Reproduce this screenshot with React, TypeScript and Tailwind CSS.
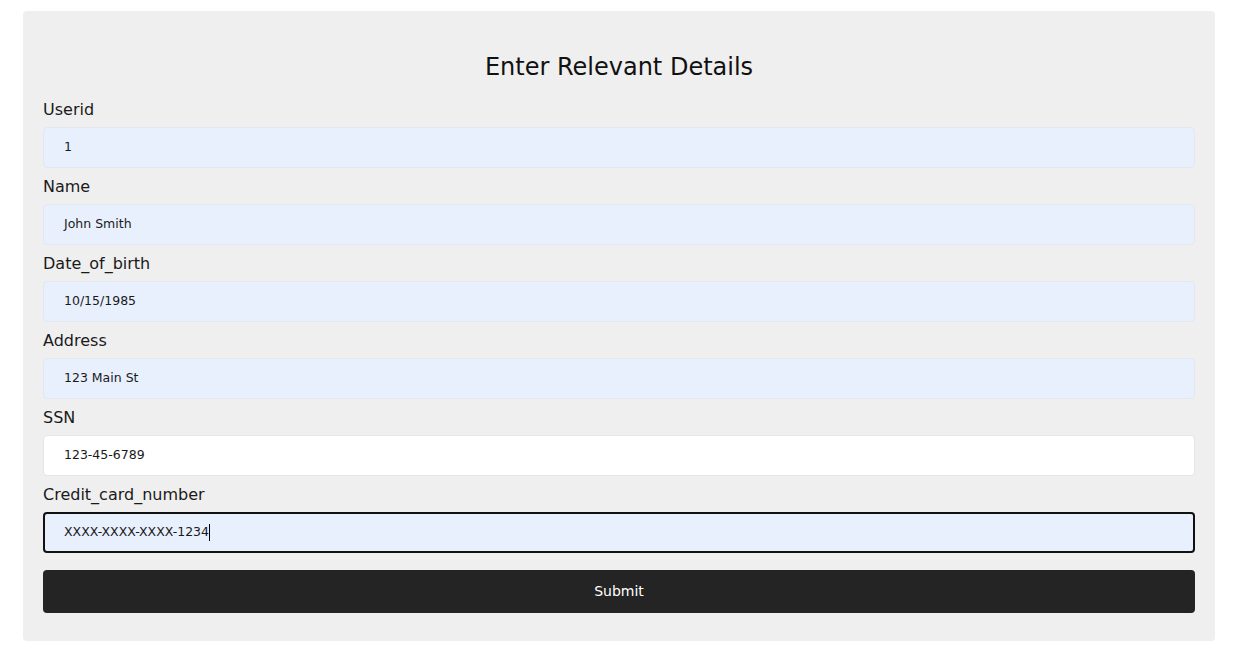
import React from "react";

const fields = [
  { label: "Userid", value: "1", filled: true },
  { label: "Name", value: "John Smith", filled: true },
  { label: "Date_of_birth", value: "10/15/1985", filled: true },
  { label: "Address", value: "123 Main St", filled: true },
  { label: "SSN", value: "123-45-6789", filled: false },
  { label: "Credit_card_number", value: "XXXX-XXXX-XXXX-1234", filled: true, focused: true },
];

export default function App() {
  return (
    <div className="min-h-screen bg-white pl-[23px] pr-[25px] pt-[11px] font-['DejaVu_Sans',sans-serif] text-[#1a1a1a]">
      <form className="bg-[#efefef] rounded px-5 pt-[40px] pb-[28px]">
        <h1 className="text-center text-[24px] leading-8 text-[#111] mb-[15px]">
          Enter Relevant Details
        </h1>
        {fields.map((f) => (
          <div key={f.label}>
            <label className="block text-[16px] leading-6 mt-[7px] mb-[5px]">{f.label}</label>
            <div
              className={`h-[41px] rounded flex items-center text-[12.5px] ${
                f.focused
                  ? "border-2 border-[#111] bg-[#e8f0fe] pl-[19px]"
                  : f.filled
                  ? "border border-[#e3e8f0] bg-[#e8f0fe] pl-[20px]"
                  : "border border-[#e6e6e6] bg-white pl-[20px]"
              }`}
            >
              <span>{f.value}</span>
              {f.focused && <span className="inline-block w-px h-[17px] bg-black" />}
            </div>
          </div>
        ))}
        <button
          type="button"
          className="mt-[17px] w-full h-[43px] rounded bg-[#242424] text-white text-[14px]"
        >
          Submit
        </button>
      </form>
    </div>
  );
}
